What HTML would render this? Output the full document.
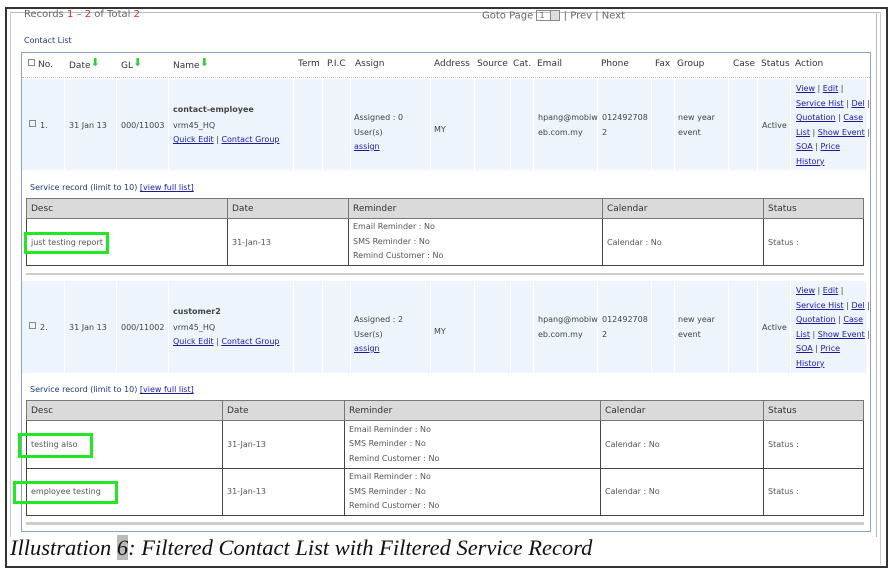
<!DOCTYPE html>
<html><head><meta charset="utf-8"><style>
*{margin:0;padding:0;box-sizing:border-box}
body{width:895px;height:577px;background:#fff;position:relative;overflow:hidden;font-family:"DejaVu Sans","Liberation Sans",sans-serif;font-size:8px;color:#444}
.a{position:absolute;white-space:nowrap}
.h{font-size:9px;color:#333}
a,.l{color:#1a1aa6;text-decoration:underline}
.g{position:absolute;border:3px solid #22e822}
.vl{position:absolute;width:1px;background:#fff}
table{position:absolute;border-collapse:collapse;font-size:8px;color:#555}
td{border:1px solid #444;padding:0 4px;vertical-align:middle}
tr.hd td{background:#dadada;color:#333;font-size:9px;height:20px;border-color:#777}
.lh{line-height:14.5px}
.ar{color:#3c3;font-size:11px;position:relative;top:-2px}
</style></head><body>
<div class="a" style="left:5px;top:7px;width:883px;height:561px;border:2px solid #333"></div>
<div class="a" style="left:10px;top:12px;width:871px;height:1px;background:#bbb"></div>
<div class="a" style="left:10px;top:12px;width:1px;height:525px;background:#ccc"></div>
<div class="a" style="left:876px;top:12px;width:1px;height:525px;background:#bbb"></div>
<div class="a" style="left:880px;top:12px;width:1px;height:553px;background:#ccc"></div>

<div class="a" style="left:24px;top:9px;font-size:10px;color:#666">Records <span style="color:#d22">1</span> – <span style="color:#d22">2</span> of Total <span style="color:#d22">2</span></div>
<div class="a" style="left:482px;top:10px;font-size:10px;color:#666">Goto Page <span style="display:inline-block;border:1px solid #888;width:24px;height:11px;font-size:8px;vertical-align:middle;line-height:9px;padding-left:2px">1<span style="display:inline-block;float:right;width:9px;height:9px;background:#ddd;border-left:1px solid #888"></span></span> | Prev | Next</div>
<div class="a" style="left:24px;top:36px;font-size:8px;color:#1a3a7a">Contact List</div>

<div class="a" style="left:21px;top:52px;width:850px;height:480px;border:1px solid #8aa6c0"></div>
<div class="a" style="left:22px;top:77px;width:848px;border-top:1px dotted #bbb"></div>
<div class="a" style="left:28px;top:59px;width:7px;height:7px;border:1px solid #888"></div>
<div class="a h" style="left:38px;top:60px">No.</div>
<div class="a h" style="left:69px;top:58px">Date<span class="ar">⬇</span></div>
<div class="a h" style="left:121px;top:58px">GL<span class="ar">⬇</span></div>
<div class="a h" style="left:173px;top:58px">Name<span class="ar">⬇</span></div>
<div class="a h" style="left:298px;top:59px">Term</div>
<div class="a h" style="left:327px;top:59px">P.I.C</div>
<div class="a h" style="left:355px;top:59px">Assign</div>
<div class="a h" style="left:434px;top:59px">Address</div>
<div class="a h" style="left:477px;top:59px">Source</div>
<div class="a h" style="left:513px;top:59px">Cat.</div>
<div class="a h" style="left:537px;top:59px">Email</div>
<div class="a h" style="left:601px;top:59px">Phone</div>
<div class="a h" style="left:655px;top:59px">Fax</div>
<div class="a h" style="left:677px;top:59px">Group</div>
<div class="a h" style="left:733px;top:59px">Case</div>
<div class="a h" style="left:761px;top:59px">Status</div>
<div class="a h" style="left:795px;top:59px">Action</div>

<div class="a" style="left:22px;top:79px;width:844px;height:91px;background:#eef4fc"></div>
<div class="a" style="left:22px;top:281px;width:844px;height:92px;background:#eef4fc"></div>
<div class="vl" style="left:64px;top:79px;height:91px"></div><div class="vl" style="left:116px;top:79px;height:91px"></div><div class="vl" style="left:168px;top:79px;height:91px"></div><div class="vl" style="left:293px;top:79px;height:91px"></div><div class="vl" style="left:322px;top:79px;height:91px"></div><div class="vl" style="left:350px;top:79px;height:91px"></div><div class="vl" style="left:430px;top:79px;height:91px"></div><div class="vl" style="left:474px;top:79px;height:91px"></div><div class="vl" style="left:510px;top:79px;height:91px"></div><div class="vl" style="left:533px;top:79px;height:91px"></div><div class="vl" style="left:597px;top:79px;height:91px"></div><div class="vl" style="left:651px;top:79px;height:91px"></div><div class="vl" style="left:674px;top:79px;height:91px"></div><div class="vl" style="left:728px;top:79px;height:91px"></div><div class="vl" style="left:757px;top:79px;height:91px"></div><div class="vl" style="left:790px;top:79px;height:91px"></div>
<div class="vl" style="left:64px;top:281px;height:92px"></div><div class="vl" style="left:116px;top:281px;height:92px"></div><div class="vl" style="left:168px;top:281px;height:92px"></div><div class="vl" style="left:293px;top:281px;height:92px"></div><div class="vl" style="left:322px;top:281px;height:92px"></div><div class="vl" style="left:350px;top:281px;height:92px"></div><div class="vl" style="left:430px;top:281px;height:92px"></div><div class="vl" style="left:474px;top:281px;height:92px"></div><div class="vl" style="left:510px;top:281px;height:92px"></div><div class="vl" style="left:533px;top:281px;height:92px"></div><div class="vl" style="left:597px;top:281px;height:92px"></div><div class="vl" style="left:651px;top:281px;height:92px"></div><div class="vl" style="left:674px;top:281px;height:92px"></div><div class="vl" style="left:728px;top:281px;height:92px"></div><div class="vl" style="left:757px;top:281px;height:92px"></div><div class="vl" style="left:790px;top:281px;height:92px"></div>

<div class="a" style="left:29px;top:120px;width:7px;height:7px;border:1px solid #888"></div>
<div class="a" style="left:40px;top:121px">1.</div>
<div class="a" style="left:69px;top:121px">31 Jan 13</div>
<div class="a" style="left:121px;top:121px">000/11003</div>
<div class="a" style="left:173px;top:105px;font-weight:bold;color:#444">contact-employee</div>
<div class="a" style="left:173px;top:121px">vrm45_HQ</div>
<div class="a" style="left:173px;top:135px"><span class="l">Quick Edit</span> | <span class="l">Contact Group</span></div>
<div class="a lh" style="left:354px;top:111px">Assigned : 0<br>User(s)<br><span class="l">assign</span></div>
<div class="a" style="left:434px;top:125px">MY</div>
<div class="a lh" style="left:538px;top:111px">hpang@mobiw<br>eb.com.my</div>
<div class="a lh" style="left:602px;top:111px">012492708<br>2</div>
<div class="a lh" style="left:678px;top:111px">new year<br>event</div>
<div class="a" style="left:762px;top:121px">Active</div>
<div class="a lh" style="left:796px;top:82px"><span class="l">View</span> | <span class="l">Edit</span> |<br><span class="l">Service Hist</span> | <span class="l">Del</span> |<br><span class="l">Quotation</span> | <span class="l">Case</span><br><span class="l">List</span> | <span class="l">Show Event</span> |<br><span class="l">SOA</span> | <span class="l">Price</span><br><span class="l">History</span></div>

<div class="a" style="left:30px;top:183px;color:#1a3a7a">Service record (limit to 10) <span class="l">[view full list]</span></div>
<table style="left:26px;top:198px;width:838px;height:68px">
<tr class="hd"><td style="width:201px">Desc</td><td style="width:121px">Date</td><td style="width:254px">Reminder</td><td style="width:161px">Calendar</td><td>Status</td></tr>
<tr><td>just testing report</td><td>31-Jan-13</td><td class="lh">Email Reminder : No<br>SMS Reminder : No<br>Remind Customer : No</td><td>Calendar : No</td><td>Status :</td></tr>
</table>
<div class="g" style="left:24px;top:232px;width:85px;height:22px"></div>
<div class="a" style="left:26px;top:273px;width:838px;height:2px;background:#ccc"></div>

<div class="a" style="left:29px;top:322px;width:7px;height:7px;border:1px solid #888"></div>
<div class="a" style="left:40px;top:323px">2.</div>
<div class="a" style="left:69px;top:323px">31 Jan 13</div>
<div class="a" style="left:121px;top:323px">000/11002</div>
<div class="a" style="left:173px;top:307px;font-weight:bold;color:#444">customer2</div>
<div class="a" style="left:173px;top:323px">vrm45_HQ</div>
<div class="a" style="left:173px;top:337px"><span class="l">Quick Edit</span> | <span class="l">Contact Group</span></div>
<div class="a lh" style="left:354px;top:313px">Assigned : 2<br>User(s)<br><span class="l">assign</span></div>
<div class="a" style="left:434px;top:327px">MY</div>
<div class="a lh" style="left:538px;top:313px">hpang@mobiw<br>eb.com.my</div>
<div class="a lh" style="left:602px;top:313px">012492708<br>2</div>
<div class="a lh" style="left:678px;top:313px">new year<br>event</div>
<div class="a" style="left:762px;top:323px">Active</div>
<div class="a lh" style="left:796px;top:284px"><span class="l">View</span> | <span class="l">Edit</span> |<br><span class="l">Service Hist</span> | <span class="l">Del</span> |<br><span class="l">Quotation</span> | <span class="l">Case</span><br><span class="l">List</span> | <span class="l">Show Event</span> |<br><span class="l">SOA</span> | <span class="l">Price</span><br><span class="l">History</span></div>

<div class="a" style="left:30px;top:385px;color:#1a3a7a">Service record (limit to 10) <span class="l">[view full list]</span></div>
<table style="left:26px;top:400px;width:838px;height:116px">
<tr class="hd"><td style="width:196px">Desc</td><td style="width:122px">Date</td><td style="width:256px">Reminder</td><td style="width:163px">Calendar</td><td>Status</td></tr>
<tr><td>testing also</td><td>31-Jan-13</td><td class="lh">Email Reminder : No<br>SMS Reminder : No<br>Remind Customer : No</td><td>Calendar : No</td><td>Status :</td></tr>
<tr><td>employee testing</td><td>31-Jan-13</td><td class="lh">Email Reminder : No<br>SMS Reminder : No<br>Remind Customer : No</td><td>Calendar : No</td><td>Status :</td></tr>
</table>
<div class="g" style="left:18px;top:433px;width:75px;height:25px"></div>
<div class="g" style="left:13px;top:481px;width:105px;height:23px"></div>
<div class="a" style="left:26px;top:522px;width:838px;height:3px;background:#ccc"></div>

<div class="a" style="left:10px;top:535px;font-family:'Liberation Serif',serif;font-style:italic;font-size:22.5px;color:#111">Illustration <span style="background:#bbb">6</span>: Filtered Contact List with Filtered Service Record</div>
</body></html>
